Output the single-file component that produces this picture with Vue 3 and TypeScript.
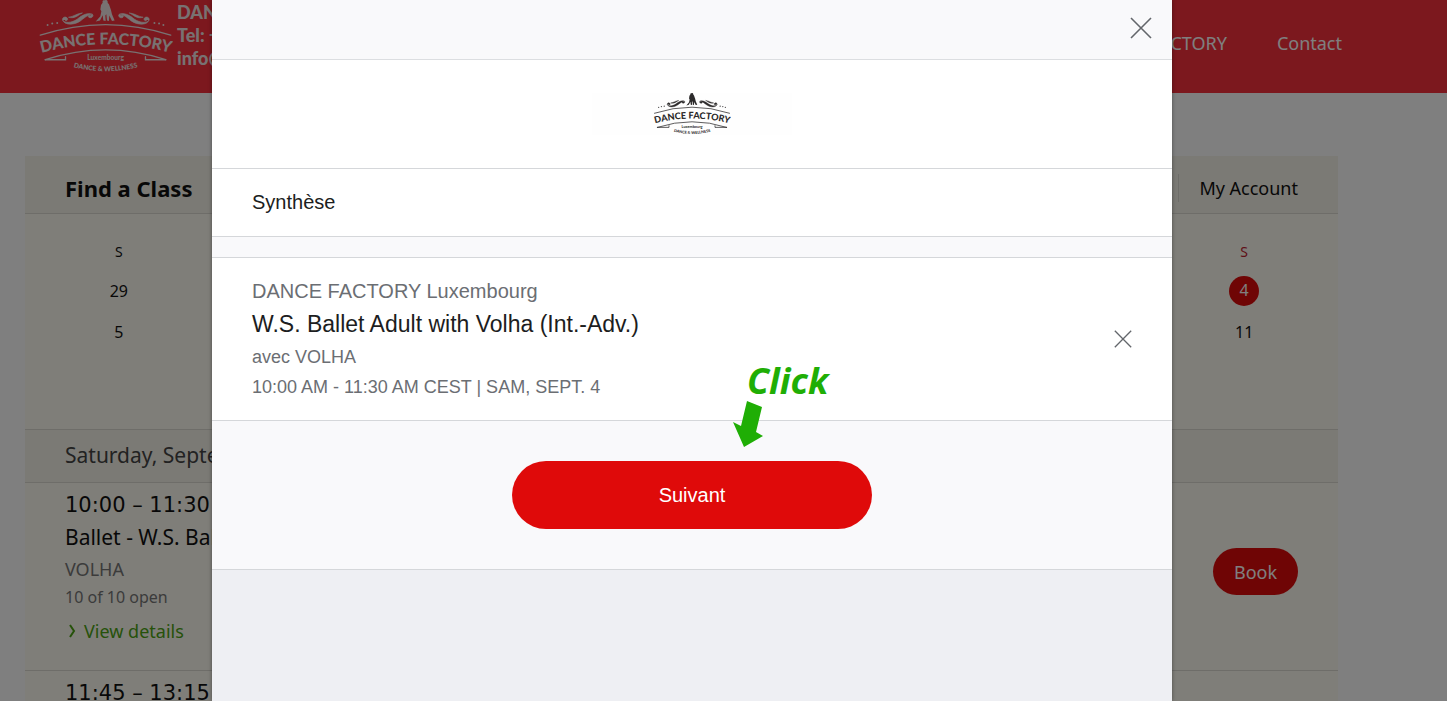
<script setup lang="ts">
import { h } from 'vue'

interface Week {
  first: string
  last: string
  active: boolean
}

const weeks: Week[] = [
  { first: '29', last: '4', active: true },
  { first: '5', last: '11', active: false },
]

const line = { fill: 'none', stroke: 'currentColor', 'stroke-linecap': 'round' }
const swirl =
  'M188 60C194 71 216 69 232 58C248 45 264 37 278 43C268 42 256 52 242 63C222 77 193 76 188 60ZM188 60C187 50 200 49 203 56C205 61 198 65 195 60M278 43C284 49 274 57 267 52C263 48 268 44 272 47M206 52C222 50 232 40 248 39C236 44 226 58 206 52Z'

const BrandLogo = () =>
  h('svg', { viewBox: '115 0 405 220', role: 'img', 'aria-label': 'Dance Factory' }, [
    h('path', { ...line, 'stroke-width': 4, d: 'M121 106Q318 42 514 106' }),
    h('path', { ...line, 'stroke-width': 4, d: 'M136 180Q318 121 499 180' }),
    h('path', { ...line, 'stroke-width': 4, d: 'M136 180H197V171M499 180H438V171' }),
    h('path', { fill: 'currentColor', stroke: 'currentColor', 'stroke-width': 2, d: swirl }),
    h('path', {
      fill: 'currentColor',
      stroke: 'currentColor',
      'stroke-width': 2,
      transform: 'matrix(-1 0 0 1 637 0)',
      d: swirl,
    }),
    ...[
      [143, 75],
      [157, 71],
      [172, 69],
      [465, 69],
      [479, 71],
      [492, 75],
    ].map(([cx, cy]) => h('circle', { cx, cy, r: 3, fill: 'currentColor' })),
    h('path', {
      fill: 'currentColor',
      d: 'M309 8C307 2 311 0 315 1C320 -2 325 1 324 8L328 13L334 30L337 43L345 62L337 63L329 47L328 63L322 62L320 43L317 47L318 63L311 62L309 46L301 62L288 65L302 49L305 34L302 29L304 15Z',
    }),
    h('path', { id: 'name-curve', fill: 'none', d: 'M128 158Q318 109 510 158' }),
    h('path', { id: 'tag-curve', fill: 'none', d: 'M220 202Q318 227 416 202' }),
    h(
      'text',
      { fill: 'currentColor', 'font-family': 'Lato, sans-serif', 'font-weight': 900, 'font-size': 48, 'text-anchor': 'middle' },
      h('textPath', { href: '#name-curve', startOffset: '50%' }, 'DANCE FACTORY'),
    ),
    h(
      'text',
      { x: 318, y: 182, fill: 'currentColor', 'font-family': 'Lato, sans-serif', 'font-weight': 700, 'font-size': 20, 'text-anchor': 'middle' },
      'Luxembourg',
    ),
    h(
      'text',
      { fill: 'currentColor', 'font-family': 'Lato, sans-serif', 'font-weight': 900, 'font-size': 20, 'text-anchor': 'middle' },
      h('textPath', { href: '#tag-curve', startOffset: '50%' }, 'DANCE & WELLNESS'),
    ),
  ])
</script>

<template>
  <div class="page">
    <header class="site-header">
      <BrandLogo class="site-logo" />
      <address class="contact">
        <span>DANCE</span>
        <span>Tel: +352</span>
        <span>info@</span>
      </address>
      <nav class="site-nav">
        <a href="#">DANCE FACTORY</a>
        <a href="#">Contact</a>
      </nav>
    </header>

    <main class="schedule">
      <div class="schedule-head">
        <h1>Find a Class</h1>
        <a href="#">My Account</a>
      </div>
      <table class="calendar">
        <thead>
          <tr>
            <th>S</th>
            <th colspan="5"></th>
            <th class="red">S</th>
          </tr>
        </thead>
        <tbody>
          <tr v-for="week in weeks" :key="week.first">
            <td>{{ week.first }}</td>
            <td colspan="5"></td>
            <td><span :class="{ today: week.active }">{{ week.last }}</span></td>
          </tr>
        </tbody>
      </table>
      <h2 class="day">Saturday, September 4</h2>
      <section class="lesson">
        <div class="lesson-info">
          <p class="time">10:00 – 11:30</p>
          <p class="name">Ballet - W.S. Ballet</p>
          <p class="teacher">VOLHA</p>
          <p class="open">10 of 10 open</p>
          <a class="details" href="#">
            <svg viewBox="0 0 8 14" aria-hidden="true"><path d="M2 1L6 7L2 13" /></svg>
            View details
          </a>
        </div>
        <button class="book" type="button">Book</button>
      </section>
      <section class="lesson">
        <div class="lesson-info">
          <p class="time">11:45 – 13:15</p>
        </div>
      </section>
    </main>

    <div class="overlay">
      <div class="modal" role="dialog" aria-modal="true" aria-labelledby="summary">
        <div class="modal-top">
          <button class="close" type="button" aria-label="Fermer">
            <svg viewBox="0 0 22 22"><path d="M1 1L21 21M21 1L1 21" /></svg>
          </button>
        </div>
        <div class="modal-brand">
          <div class="brand-plate"><BrandLogo class="modal-logo" /></div>
        </div>
        <h2 id="summary" class="summary">Synthèse</h2>
        <div class="item">
          <div class="item-info">
            <p class="studio">DANCE FACTORY Luxembourg</p>
            <h3>W.S. Ballet Adult with Volha (Int.-Adv.)</h3>
            <p class="meta">avec VOLHA</p>
            <p class="meta">10:00 AM - 11:30 AM CEST | SAM, SEPT. 4</p>
          </div>
          <button class="remove" type="button" aria-label="Supprimer">
            <svg viewBox="0 0 22 22"><path d="M1 1L21 21M21 1L1 21" /></svg>
          </button>
        </div>
        <div class="actions">
          <button class="next" type="button">Suivant</button>
        </div>
        <div class="hint">
          <span>Click</span>
          <svg viewBox="0 0 30 46" aria-hidden="true">
            <path d="M14 0L29 6L23 31L30 35L11 46L0 21L8 25Z" />
          </svg>
        </div>
      </div>
    </div>
  </div>
</template>

<style>
body {
  margin: 0;
}
</style>

<style scoped>
* {
  box-sizing: border-box;
}
p,
h1,
h2,
h3 {
  margin: 0;
  font-weight: 400;
}
a {
  color: inherit;
  text-decoration: none;
}
button {
  border: 0;
  padding: 0;
  cursor: pointer;
}
.page {
  position: relative;
  height: 100vh;
  overflow: hidden;
  background: #fff;
  font-family: 'Noto Sans', sans-serif;
  color: #111;
}
.site-header {
  display: flex;
  height: 93px;
  padding: 0 105px 0 38px;
  background: #f8303c;
  color: #fff;
}
.site-logo {
  flex: none;
  width: 135px;
  height: 73px;
  color: #f0e4e4;
}
.contact {
  display: flex;
  flex-direction: column;
  margin: 1px 0 0 4px;
  font-family: Lato, sans-serif;
  font-size: 18px;
  font-style: normal;
  font-weight: 900;
  line-height: 23px;
  color: #f0e4e4;
}
.site-nav {
  display: flex;
  gap: 50px;
  margin-left: auto;
  padding-top: 31px;
  font-size: 18px;
  line-height: 24px;
}
.schedule {
  margin: 63px 109px 0 25px;
  background: #fefcf2;
}
.schedule-head {
  display: flex;
  align-items: center;
  justify-content: space-between;
  height: 58px;
  padding: 6px 40px 0;
  background: #f6f4ea;
  border-bottom: 1px solid #dcdad2;
}
.schedule-head h1 {
  font-size: 22px;
  font-weight: 700;
  line-height: 28px;
}
.schedule-head a {
  padding-left: 20px;
  border-left: 1px solid #dcdad2;
  font-size: 18px;
  line-height: 28px;
}
.calendar {
  width: 100%;
  height: 216px;
  padding: 20px 0 76px;
  table-layout: fixed;
  border-collapse: separate;
  border-spacing: 0;
  border-bottom: 1px solid #dcdad2;
  font-size: 16px;
  line-height: 30px;
  text-align: center;
}
.calendar th {
  height: 36px;
  padding: 0;
  font-size: 14px;
  font-weight: 400;
}
.calendar td {
  height: 41px;
  padding: 0;
}
.calendar .red {
  color: #c02030;
}
.today {
  display: block;
  width: 30px;
  height: 30px;
  margin: 0 auto;
  border-radius: 50%;
  background: #df0a0a;
  color: #fff;
  line-height: 28px;
}
.day {
  height: 53px;
  padding: 0 40px;
  background: #f6f4ea;
  border-bottom: 1px solid #dcdad2;
  font-size: 21px;
  line-height: 50px;
  color: #444;
}
.lesson {
  display: flex;
  align-items: center;
  justify-content: space-between;
  min-height: 188px;
  padding: 6px 40px 16px;
  border-bottom: 1px solid #dcdad2;
}
.lesson-info {
  align-self: flex-start;
}
.time,
.name {
  font-size: 21px;
  line-height: 32px;
}
.time {
  font-family: 'DejaVu Sans', sans-serif;
}
.teacher {
  font-size: 18px;
  line-height: 32px;
  color: #777;
}
.open {
  font-size: 16px;
  line-height: 24px;
  color: #777;
}
.details {
  display: flex;
  align-items: center;
  gap: 8px;
  padding-left: 3px;
  font-size: 18px;
  line-height: 44px;
  color: #4ca414;
}
.details svg {
  width: 8px;
  height: 14px;
  fill: none;
  stroke: currentColor;
  stroke-width: 2;
}
.book {
  width: 85px;
  height: 47px;
  border-radius: 24px;
  background: #df0a0a;
  color: #fff;
  font-family: inherit;
  font-size: 18px;
}
.overlay {
  position: absolute;
  inset: 0;
  padding-right: 63px;
  background: rgba(0, 0, 0, 0.5);
}
.modal {
  position: relative;
  max-width: 960px;
  height: 100%;
  margin: 0 auto;
  background: #eeeff3;
  box-shadow: 0 0 4px rgba(0, 0, 0, 0.4);
  font-family: 'Liberation Sans', Arial, sans-serif;
  color: #1c1d21;
}
.modal-top {
  display: flex;
  align-items: center;
  justify-content: flex-end;
  height: 60px;
  padding: 0 20px 3px;
  background: #f9f9fb;
  border-bottom: 1px solid #dcdee1;
}
.close,
.remove {
  display: flex;
  background: none;
  color: #63666b;
}
.close svg {
  width: 22px;
  height: 22px;
}
.remove svg {
  width: 18px;
  height: 18px;
}
.close path,
.remove path {
  fill: none;
  stroke: currentColor;
  stroke-width: 1.6;
}
.modal-brand {
  display: flex;
  align-items: center;
  justify-content: center;
  height: 109px;
  background: #fff;
  border-bottom: 1px solid #d5d7da;
}
.brand-plate {
  display: flex;
  justify-content: center;
  width: 200px;
  background: #fefefe;
}
.modal-logo {
  width: 78px;
  height: 42px;
  color: #2c2a2b;
}
.summary {
  height: 68px;
  padding: 0 40px;
  background: #fff;
  border-bottom: 1px solid #d5d7da;
  font-size: 20px;
  line-height: 66px;
}
.item {
  display: flex;
  align-items: center;
  justify-content: space-between;
  height: 184px;
  padding: 0 40px;
  background: #fff;
  border-top: 20px solid #f9f9fb;
  border-bottom: 1px solid #d5d7da;
  box-shadow: inset 0 1px #d5d7da;
}
.studio {
  font-size: 20px;
  line-height: 32px;
  color: #6b6e73;
}
.item h3 {
  margin-bottom: 1px;
  font-size: 23px;
  line-height: 34px;
}
.meta {
  font-size: 18px;
  line-height: 30px;
  color: #6b6e73;
}
.actions {
  display: flex;
  justify-content: center;
  padding: 40px;
  background: #f9f9fb;
  border-bottom: 1px solid #d5d7da;
}
.next {
  width: 360px;
  height: 68px;
  border-radius: 34px;
  background: #df0a0a;
  color: #fff;
  font-family: inherit;
  font-size: 20px;
}
.hint {
  position: absolute;
  top: 361px;
  left: 521px;
  color: #1fae05;
  font-family: 'Noto Sans', sans-serif;
  font-size: 36px;
  font-style: italic;
  font-weight: 700;
  line-height: 40px;
}
.hint span {
  display: block;
  padding-left: 14px;
}
.hint svg {
  display: block;
  width: 30px;
  height: 46px;
  fill: currentColor;
}
</style>
